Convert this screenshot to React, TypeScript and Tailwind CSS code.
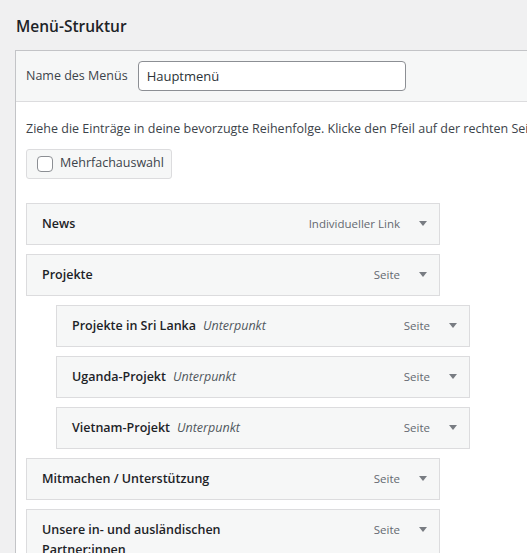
import React from 'react'

interface MenuItem {
  title: string
  type: string
  sub?: boolean
}

const items: MenuItem[] = [
  { title: 'News', type: 'Individueller Link' },
  { title: 'Projekte', type: 'Seite' },
  { title: 'Projekte in Sri Lanka', type: 'Seite', sub: true },
  { title: 'Uganda-Projekt', type: 'Seite', sub: true },
  { title: 'Vietnam-Projekt', type: 'Seite', sub: true },
  { title: 'Mitmachen / Unterstützung', type: 'Seite' },
  { title: 'Unsere in- und ausländischen Partner:innen', type: 'Seite' },
]

function ItemBar({ item }: { item: MenuItem }) {
  return (
    <div className={item.sub ? 'pl-[30px]' : ''}>
      <div className="flex w-[414px] items-start border border-[#dcdcde] bg-[#f6f7f7] py-[10px] pl-[15px] pr-[12px]">
        <span className="w-[213px] text-[12.5px] font-semibold leading-[20px] text-[#1d2327]">
          {item.title}
          {item.sub && <span className="pl-[7px] text-[12.5px] font-normal italic text-[#50575e]">Unterpunkt</span>}
        </span>
        <span className="ml-auto mr-[19px] text-[11.5px] leading-[20px] text-[#646970]">{item.type}</span>
        <svg className="mt-[7px] h-[5px] w-[8px] shrink-0" viewBox="0 0 8 5">
          <path d="M0 0h8L4 5z" fill="#787c82" />
        </svg>
      </div>
    </div>
  )
}

export default function App() {
  return (
    <div
      className="h-[553px] w-[527px] overflow-hidden bg-[#f0f0f1] text-[#1d2327]"
      style={{ fontFamily: '"Open Sans", "Noto Sans", sans-serif' }}
    >
      <h2 className="pl-4 pt-[15px] text-[15.5px] font-semibold leading-[22px]">Menü-Struktur</h2>

      <div className="ml-[15px] mt-[13px] w-[640px] border border-[#c3c4c7] bg-white">
        {/* Header */}
        <div className="flex h-[51px] items-center gap-[10px] border-b border-[#dcdcde] bg-[#f6f7f7] px-[10px]">
          <label className="text-[12.5px] text-[#3c434a]">Name des Menüs</label>
          <input
            type="text"
            defaultValue="Hauptmenü"
            className="h-[30px] w-[268px] rounded-[4px] border border-[#8c8f94] bg-white px-2 text-[13px] text-[#2c3338] outline-none"
          />
        </div>

        {/* Body */}
        <div className="px-[10px] pb-10 pt-[17px]">
          <p className="whitespace-nowrap text-[12.5px] leading-[19.5px] text-[#3c434a]">
            Ziehe die Einträge in deine bevorzugte Reihenfolge. Klicke den Pfeil auf der rechten Seite
          </p>

          <label className="mt-[10px] flex h-[30px] w-[146px] items-center gap-[7px] rounded-[3px] border border-[#dcdcde] bg-[#f6f7f7] px-[10px] text-[12.5px] text-[#3c434a]">
            <span className="h-4 w-4 shrink-0 rounded-[4px] border border-[#8c8f94] bg-white" />
            Mehrfachauswahl
          </label>

          {/* Menu items */}
          <div className="mt-[24px] flex flex-col gap-[9px]">
            {items.map((item) => (
              <ItemBar key={item.title} item={item} />
            ))}
          </div>
        </div>
      </div>
    </div>
  )
}
